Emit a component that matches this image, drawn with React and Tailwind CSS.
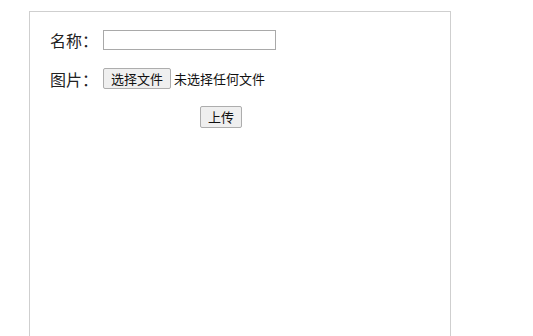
import React from "react";

const font = { fontFamily: '"Microsoft YaHei", "Noto Sans CJK SC", sans-serif' };

export default function App() {
  return (
    <div className="h-[336px] overflow-hidden bg-white pt-[11px] pl-[29px]" style={font}>
      <div className="w-[422px] h-[325px] border border-[#cfcfcf] border-b-0">
        {/* 名称 */}
        <div className="flex items-center mt-[18px] pl-[20px] h-[20px]">
          <span className="w-[53px] text-[16px] leading-[20px] text-[#222]">名称：</span>
          <input
            type="text"
            className="w-[173px] h-[20px] border border-[#a9a9a9] outline-none px-1 text-[13px]"
          />
        </div>

        {/* 图片 */}
        <div className="flex items-center mt-[18px] pl-[20px] h-[21px]">
          <span className="w-[53px] text-[16px] leading-[20px] text-[#222]">图片：</span>
          <button className="w-[68px] h-[21px] border border-[#adadad] rounded-[2px] bg-[#efefef] text-[13px] leading-[19px] text-[#111]">
            选择文件
          </button>
          <span className="ml-[3px] text-[13px] leading-[20px] text-[#111]">未选择任何文件</span>
        </div>

        {/* 上传 */}
        <div className="flex mt-[17px] pl-[170px]">
          <button className="w-[42px] h-[22px] border border-[#adadad] rounded-[2px] bg-[#efefef] text-[13px] leading-[20px] text-[#111]">
            上传
          </button>
        </div>
      </div>
    </div>
  );
}
